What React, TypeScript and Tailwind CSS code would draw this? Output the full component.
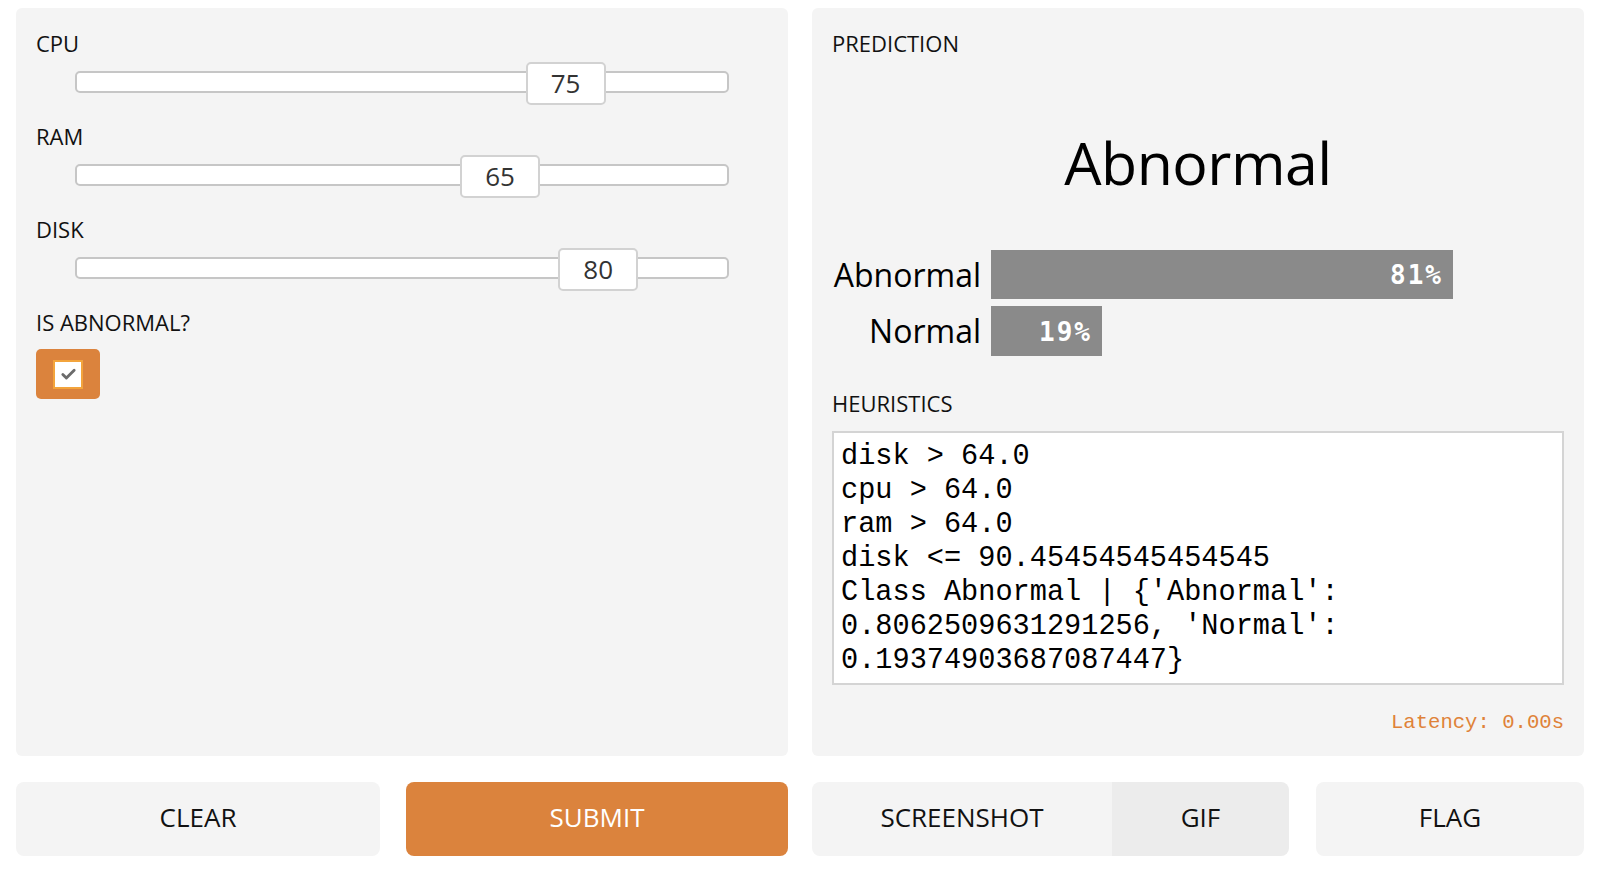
import { Check } from 'lucide-react';

const sans = "font-['Open_Sans',sans-serif]";
const mono = "font-['Liberation_Mono',monospace]";
const barMono = "font-['DejaVu_Sans_Mono',monospace]";

function SliderField({ label, value }: { label: string; value: number }) {
  return (
    <div className="mb-[16px]">
      <div className="text-[22px] leading-[30px] text-[#111]">{label}</div>
      <div className="relative mx-[39px] mt-1 h-[43px]">
        <div className="absolute inset-x-0 top-[9px] h-[22px] rounded-[5px] border-2 border-[#c6c6c6] bg-white" />
        <div
          className="absolute top-0 flex h-[43px] w-[80px] -translate-x-1/2 items-center justify-center rounded-[5px] border-2 border-[#d2d2d2] bg-white text-[26px] text-[#333]"
          style={{ left: `${value}%` }}
        >
          {value}
        </div>
      </div>
    </div>
  );
}

const confidences = [
  { label: 'Abnormal', value: 0.8063 },
  { label: 'Normal', value: 0.1937 },
];

const heuristics = [
  'disk > 64.0',
  'cpu > 64.0',
  'ram > 64.0',
  'disk <= 90.45454545454545',
  "Class Abnormal | {'Abnormal':",
  "0.8062509631291256, 'Normal':",
  '0.19374903687087447}',
];

export default function App() {
  return (
    <div className={`${sans} min-h-screen bg-white pt-2 pl-4 pr-[18px] text-black`}>
      <div className="grid h-[748px] grid-cols-2 gap-6">
        {/* inputs */}
        <div className="rounded-md bg-[#f4f4f4] p-5">
          <SliderField label="CPU" value={75} />
          <SliderField label="RAM" value={65} />
          <SliderField label="DISK" value={80} />
          <div className="text-[22px] leading-[30px] text-[#111]">IS ABNORMAL?</div>
          <div className="mt-[12px] flex h-[50px] w-[64px] items-center justify-center rounded-[5px] bg-[#db833d]">
            <div className="flex h-[29px] w-[30px] items-center justify-center border-2 border-[#f3a43c] bg-white">
              <Check className="h-[17px] w-[17px] text-[#6b6b6b]" strokeWidth={4} />
            </div>
          </div>
        </div>

        {/* outputs */}
        <div className="flex flex-col rounded-md bg-[#f4f4f4] p-5">
          <div className="text-[22px] leading-[30px] text-[#111]">PREDICTION</div>
          <div className="mt-[74px] text-center text-[59px] leading-[60px] tracking-[-0.5px]">Abnormal</div>
          <div className="mt-[58px] grid grid-cols-[149px_1fr] gap-x-[10px] gap-y-[7px]">
            {confidences.map((c, i) => (
              <div key={c.label} className="contents">
                <div className={`flex items-center justify-end text-[32px] ${i === 0 ? 'h-[49px]' : 'h-[50px]'}`}>
                  {c.label}
                </div>
                <div className="flex items-center">
                  <div
                    className={`${barMono} flex items-center justify-end bg-[#8a8a8a] pt-[2px] pr-[10px] text-[26px] font-bold tracking-[2px] text-white ${i === 0 ? 'h-[49px]' : 'h-[50px]'}`}
                    style={{ width: `${c.value * 100}%` }}
                  >
                    {Math.round(c.value * 100)}%
                  </div>
                </div>
              </div>
            ))}
          </div>
          <div className="mt-[32px] text-[22px] leading-[30px] text-[#111]">HEURISTICS</div>
          <div className={`${mono} mt-[13px] h-[254px] border-2 border-[#d4d4d4] bg-white px-[7px] pt-[7px] text-[28.6px] leading-[34px] text-black`}>
            {heuristics.map((line) => (
              <div key={line} className="whitespace-pre">{line}</div>
            ))}
          </div>
          <div className={`${mono} mt-[26px] text-right text-[20.6px] leading-[24px] text-[#df8238]`}>Latency: 0.00s</div>
        </div>
      </div>

      <div className="mt-[26px] grid h-[74px] grid-cols-2 gap-6 text-[26px]">
        <div className="flex gap-[26px]">
          <button className="flex w-[364px] items-center justify-center rounded-lg bg-[#f4f4f4] pb-[3px] text-[#111]">CLEAR</button>
          <button className="flex flex-1 items-center justify-center rounded-lg bg-[#db833d] pb-[3px] text-white">SUBMIT</button>
        </div>
        <div className="flex gap-[27px]">
          <div className="flex w-[477px] overflow-hidden rounded-lg">
            <button className="flex w-[300px] items-center justify-center bg-[#f4f4f4] pb-[3px] text-[#111]">SCREENSHOT</button>
            <button className="flex flex-1 items-center justify-center bg-[#ececec] pb-[3px] text-[#111]">GIF</button>
          </div>
          <button className="flex flex-1 items-center justify-center rounded-lg bg-[#f4f4f4] pb-[3px] text-[#111]">FLAG</button>
        </div>
      </div>
    </div>
  );
}
